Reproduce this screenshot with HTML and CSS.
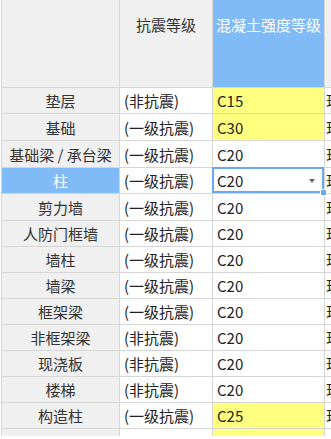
FILE: index.html
```html
<!DOCTYPE html>
<html>
<head>
    <meta charset="utf-8">
    <title>混凝土强度等级</title>
<link rel="stylesheet" href="styles.css">
</head>
<body>
    <div class="sheet">
        <div class="hd"></div>
        <div class="hd">抗震等级</div>
        <div class="hd hd-sel">混凝土强度等级</div>
        <div class="hd"></div>

        <div class="rh">垫层</div>
        <div class="cell">(非抗震)</div>
        <div class="cell yellow">C15</div>
        <div class="cell more">现</div>

        <div class="rh">基础</div>
        <div class="cell">(一级抗震)</div>
        <div class="cell yellow">C30</div>
        <div class="cell more">现</div>

        <div class="rh">基础梁 / 承台梁</div>
        <div class="cell">(一级抗震)</div>
        <div class="cell">C20</div>
        <div class="cell more">现</div>

        <div class="rh rh-sel">柱</div>
        <div class="cell">(一级抗震)</div>
        <div class="cell sel">C20<span class="drop"></span><span class="handle"></span></div>
        <div class="cell more">现</div>

        <div class="rh">剪力墙</div>
        <div class="cell">(一级抗震)</div>
        <div class="cell">C20</div>
        <div class="cell more">现</div>

        <div class="rh">人防门框墙</div>
        <div class="cell">(一级抗震)</div>
        <div class="cell">C20</div>
        <div class="cell more">现</div>

        <div class="rh">墙柱</div>
        <div class="cell">(一级抗震)</div>
        <div class="cell">C20</div>
        <div class="cell more">现</div>

        <div class="rh">墙梁</div>
        <div class="cell">(一级抗震)</div>
        <div class="cell">C20</div>
        <div class="cell more">现</div>

        <div class="rh">框架梁</div>
        <div class="cell">(一级抗震)</div>
        <div class="cell">C20</div>
        <div class="cell more">现</div>

        <div class="rh">非框架梁</div>
        <div class="cell">(非抗震)</div>
        <div class="cell">C20</div>
        <div class="cell more">现</div>

        <div class="rh">现浇板</div>
        <div class="cell">(非抗震)</div>
        <div class="cell">C20</div>
        <div class="cell more">现</div>

        <div class="rh">楼梯</div>
        <div class="cell">(非抗震)</div>
        <div class="cell">C20</div>
        <div class="cell more">现</div>

        <div class="rh">构造柱</div>
        <div class="cell">(一级抗震)</div>
        <div class="cell yellow">C25</div>
        <div class="cell more">现</div>

        <div class="rh"></div>
        <div class="cell"></div>
        <div class="cell yellow"></div>
        <div class="cell"></div>
    </div>
</body>
</html>
```

FILE: styles.css
```css
body {
    margin: 0;
    background-color: white;
    font-family: "Noto Sans CJK SC", "Noto Sans", sans-serif;
    font-size: 15px;
    color: #222;
    overflow: hidden;
}
.sheet {
    display: grid;
    grid-template-columns: 117px 92px 111px 40px;
    grid-template-rows: 87px 25px 26px 26px 25px 26px 25px 25px 25px 25px 25px 25px 25px 25px 7px;
    gap: 1px;
    margin-left: 1px;
    padding-left: 1px;
    background-color: #d6d6d6;
    width: 330px;
    overflow: hidden;
}
.hd {
    background-color: #f0f0f0;
    color: #333;
    text-align: center;
    padding-top: 14px;
    line-height: 22px;
    white-space: nowrap;
}
.hd-sel {
    background-color: #80bbf7;
    color: white;
}
.rh {
    background-color: #f0f0f0;
    color: #333;
    display: flex;
    align-items: center;
    justify-content: center;
    white-space: nowrap;
}
.rh-sel {
    background-color: #80bbf7;
    color: white;
}
.cell {
    background-color: white;
    display: flex;
    align-items: center;
    padding-left: 4px;
    white-space: nowrap;
}
.yellow {
    background-color: #ffff80;
}
.more {
    padding-left: 1px;
}
.sel {
    position: relative;
}
.sel::after {
    content: "";
    position: absolute;
    top: -1px;
    left: -1px;
    right: 0;
    bottom: 0;
    border: 2px solid #6aa9ee;
}
.drop {
    position: absolute;
    right: 9px;
    top: 11px;
    border-top: 4px solid #666;
    border-left: 3px solid transparent;
    border-right: 3px solid transparent;
}
.handle {
    position: absolute;
    right: -3px;
    bottom: -3px;
    width: 5px;
    height: 5px;
    background-color: #6aa9ee;
    border: 1px solid white;
    z-index: 1;
}
```
